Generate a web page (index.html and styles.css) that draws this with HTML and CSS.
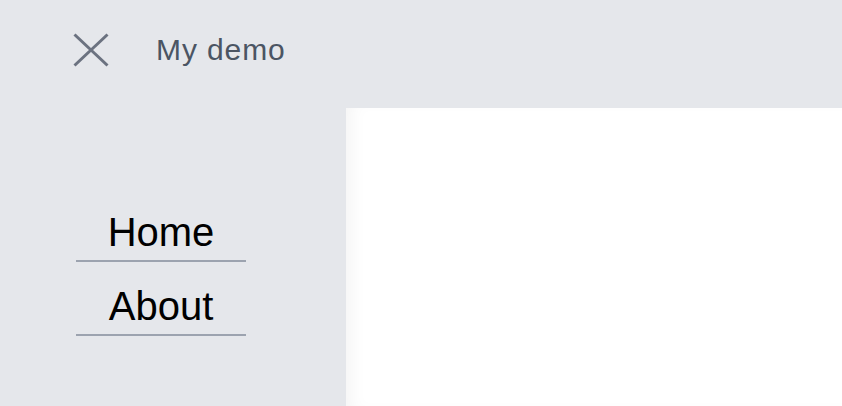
FILE: index.html
```html
<!DOCTYPE html>
<html lang="en">
<head>
<meta charset="utf-8">
<title>My demo</title>
<link rel="stylesheet" href="styles.css">
</head>
<body>
<header class="topbar">
  <button class="close-btn" aria-label="Close menu">
    <svg width="36" height="34" viewBox="0 0 36 34" aria-hidden="true">
      <line x1="1.5" y1="1.5" x2="34.5" y2="32.5"/>
      <line x1="34.5" y1="1.5" x2="1.5" y2="32.5"/>
    </svg>
  </button>
  <span class="title">My demo</span>
</header>
<div class="layout">
  <aside class="sidebar">
    <nav class="nav">
      <a class="nav-item" href="#">Home</a>
      <a class="nav-item" href="#">About</a>
    </nav>
  </aside>
  <main class="content"></main>
</div>
</body>
</html>
```
FILE: styles.css
```css
* { box-sizing: border-box; }
html, body { margin: 0; height: 100%; }
body {
  background: #e5e7eb;
  font-family: "Liberation Sans", Arial, sans-serif;
  display: flex;
  flex-direction: column;
  overflow: hidden;
}
.topbar {
  height: 108px;
  padding: 0 0 8px 73px;
  display: flex;
  align-items: center;
  gap: 47px;
  flex-shrink: 0;
}
.close-btn {
  border: 0;
  background: none;
  padding: 0;
  width: 36px;
  height: 34px;
  display: block;
}
.close-btn svg { display: block; }
.close-btn line {
  stroke: #6b7280;
  stroke-width: 3;
}
.title {
  font-size: 30px;
  letter-spacing: 0.9px;
  color: #4b5563;
  line-height: normal;
}
.layout {
  flex: 1;
  display: flex;
  min-height: 0;
}
.sidebar {
  width: 346px;
  flex-shrink: 0;
  padding: 80px 0 0 76px;
}
.nav {
  width: 170px;
  display: flex;
  flex-direction: column;
}
.nav-item {
  display: block;
  text-align: center;
  color: #000;
  text-decoration: none;
  font-size: 40px;
  padding-top: 16px;
  line-height: 56px;
  border-bottom: 2px solid #9ca3af;
}
.content {
  flex: 1;
  background: #fff;
  box-shadow: inset 14px 0 18px -10px rgba(0, 0, 0, 0.05);
}
```
